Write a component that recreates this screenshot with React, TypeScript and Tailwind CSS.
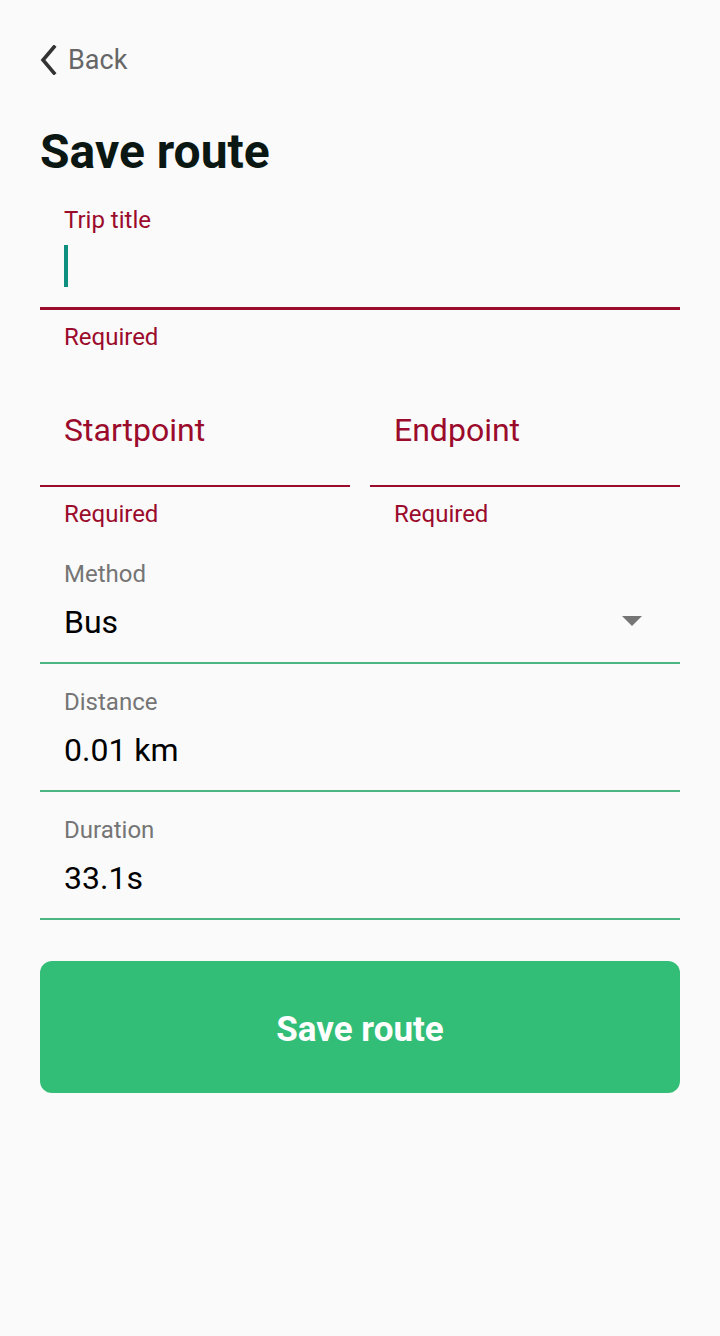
import React from "react";

const font = { fontFamily: "Roboto, 'Noto Sans', sans-serif" };

function Field({ label, value, dropdown }: { label: string; value: string; dropdown?: boolean }) {
  return (
    <div className="flex flex-col">
      <div className="mt-[25px] h-[26px] pl-6 text-[24px] leading-[26px] text-[#757575]">{label}</div>
      <div className="mt-[18px] flex h-[34px] items-center justify-between pl-6 pr-[38px]">
        <span className="text-[32px] leading-[34px] text-black">{value}</span>
        {dropdown && (
          <svg width="20" height="10" viewBox="0 0 20 10" className="mt-[-2px]">
            <polygon points="0,0 20,0 10,10" fill="#757575" />
          </svg>
        )}
      </div>
      <div className="mt-[23px] h-[2px] bg-[#4db584]" />
    </div>
  );
}

export default function App() {
  return (
    <div className="min-h-[1336px] w-[720px] bg-[#fafafa] px-10" style={font}>
      <div className="flex flex-col">
        <div className="mt-[45px] flex h-[30px] items-center">
          <svg width="18" height="30" viewBox="0 0 18 30" className="ml-[-1px]">
            <polyline points="15,2 4,15 15,28" fill="none" stroke="#333333" strokeWidth="3.6" strokeLinecap="square" strokeLinejoin="miter" />
          </svg>
          <span className="ml-[11px] text-[27px] leading-[30px] text-[#666666]">Back</span>
        </div>

        <h1 className="mt-[49px] h-[56px] text-[48px] font-bold leading-[56px] text-[#0b1712]">Save route</h1>

        <div className="mt-[27px] h-[26px] pl-6 text-[24px] leading-[26px] text-[#9b0b2b]">Trip title</div>
        <div className="h-[74px] pl-6 pt-[12px]">
          <div className="h-[42px] w-[4px] bg-[#0f8f7f]" />
        </div>
        <div className="h-[3px] bg-[#9b0b2b]" />
        <div className="mt-[14px] h-[26px] pl-6 text-[24px] leading-[26px] text-[#9b0b2b]">Required</div>

        <div className="grid grid-cols-2 gap-5">
          {["Startpoint", "Endpoint"].map((l) => (
            <div key={l} className="flex flex-col">
              <div className="mt-[63px] h-[34px] pl-6 text-[32px] leading-[34px] text-[#9b0b2b]">{l}</div>
              <div className="mt-[38px] h-[2px] bg-[#9b0b2b]" />
              <div className="mt-[14px] h-[26px] pl-6 text-[24px] leading-[26px] text-[#9b0b2b]">Required</div>
            </div>
          ))}
        </div>

        <div className="mt-[9px]">
          <Field label="Method" value="Bus" dropdown />
        </div>
        <Field label="Distance" value="0.01 km" />
        <Field label="Duration" value="33.1s" />

        <button className="mt-[41px] flex h-[132px] items-center justify-center rounded-[12px] bg-[#33be78] pt-[7px] text-[35px] font-bold text-white">
          Save route
        </button>
      </div>
    </div>
  );
}
